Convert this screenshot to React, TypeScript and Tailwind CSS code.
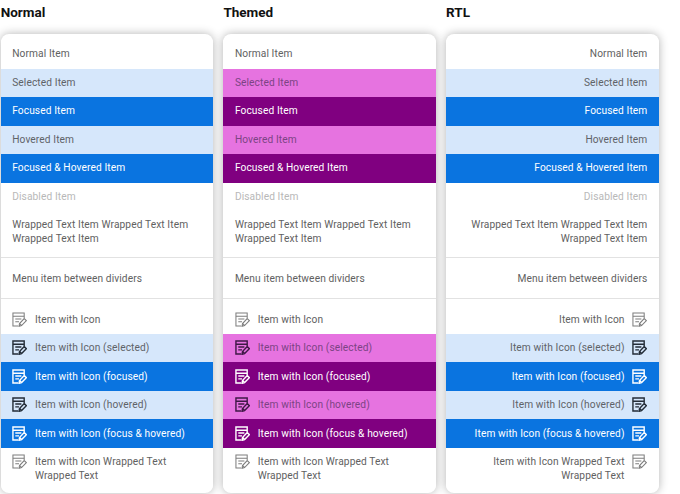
import React from "react";

type Kind = "normal" | "selected" | "focused" | "hovered" | "both" | "disabled";

const DocIcon = ({ cls, sw }: { cls: string; sw: number }) => (
  <svg viewBox="0 0 16 16" fill="none" stroke="currentColor" strokeWidth={sw} className={`w-[15px] h-[15px] shrink-0 ${cls}`}>
    <path d="M6.5 15H1V1H13V6.5" />
    <path d="M1 4.5H13" />
    <path d="M3.5 7.5H10" />
    <path d="M3.5 10.5H7.5" />
    <path d="M7.5 15.3L8 12.3L13 7L15.3 9.2L10.2 14.5Z" />
    <path d="M8.2 12.4L10.2 14.3" />
  </svg>
);

const Row = ({ kind, text, icon, rtl, themed }: { kind: Kind; text: React.ReactNode; icon?: boolean; rtl?: boolean; themed?: boolean }) => {
  const light = themed ? "bg-[#e673e0] text-[#7c4484]" : "bg-[#d6e7fb] text-[#5f6368]";
  const dark = themed ? "bg-[#800080] text-white" : "bg-[#0a74e0] text-white";
  const c =
    kind === "selected" || kind === "hovered"
      ? light
      : kind === "focused" || kind === "both"
      ? dark
      : kind === "disabled"
      ? "bg-white text-[#b8b8b8]"
      : "bg-white text-[#616161]";
  const iconCls =
    kind === "normal"
      ? "text-[#7d7d7d]"
      : kind === "focused" || kind === "both"
      ? "text-white"
      : themed
      ? "text-[#3f1846]"
      : "text-[#242d38]";
  return (
    <div className={`flex items-start gap-[7.8px] px-[11.5px] py-[7.25px] text-[10.2px] leading-[14px] tracking-[0.1px] ${c} ${rtl ? "flex-row-reverse text-right" : ""}`}>
      {icon && <DocIcon cls={iconCls + " -mt-px"} sw={kind === "normal" ? 1.1 : 1.5} />}
      <span className="flex-1">{text}</span>
    </div>
  );
};

const Divider = () => <div className="h-px bg-[#e2e2e2]" />;

const Column = ({ title, themed, rtl }: { title: string; themed?: boolean; rtl?: boolean }) => (
  <div className="w-[212.8px] shrink-0">
    <h3 className="h-[24px] pt-[3px] text-[13.5px] leading-[18px] font-bold text-[#111]">{title}</h3>
    <div className="mt-[10px] h-[459px] pt-[6px] bg-white rounded-lg overflow-hidden shadow-[0_0_10px_rgba(0,0,0,0.3)]">
      <Row kind="normal" text="Normal Item" rtl={rtl} themed={themed} />
      <Row kind="selected" text="Selected Item" rtl={rtl} themed={themed} />
      <Row kind="focused" text="Focused Item" rtl={rtl} themed={themed} />
      <Row kind="hovered" text="Hovered Item" rtl={rtl} themed={themed} />
      <Row kind="both" text="Focused & Hovered Item" rtl={rtl} themed={themed} />
      <Row kind="disabled" text="Disabled Item" rtl={rtl} themed={themed} />
      <div className="-mt-[0.5px]">
        <Row kind="normal" text="Wrapped Text Item Wrapped Text Item Wrapped Text Item" rtl={rtl} themed={themed} />
      </div>
      <div className="h-[4.25px]" />
      <Divider />
      <div className="h-[6px]" />
      <Row kind="normal" text="Menu item between dividers" rtl={rtl} themed={themed} />
      <div className="h-[5.5px]" />
      <Divider />
      <div className="h-[6px]" />
      <Row kind="normal" icon text="Item with Icon" rtl={rtl} themed={themed} />
      <Row kind="selected" icon text="Item with Icon (selected)" rtl={rtl} themed={themed} />
      <Row kind="focused" icon text="Item with Icon (focused)" rtl={rtl} themed={themed} />
      <Row kind="hovered" icon text="Item with Icon (hovered)" rtl={rtl} themed={themed} />
      <Row kind="both" icon text="Item with Icon (focus & hovered)" rtl={rtl} themed={themed} />
      <Row kind="normal" icon text="Item with Icon Wrapped Text Wrapped Text" rtl={rtl} themed={themed} />
    </div>
  </div>
);

export default function App() {
  return (
    <div className="w-[680px] h-[494px] overflow-hidden bg-white pl-[0.7px] flex gap-[9.9px] font-['Roboto',sans-serif]">
      <Column title="Normal" />
      <Column title="Themed" themed />
      <Column title="RTL" rtl />
    </div>
  );
}
